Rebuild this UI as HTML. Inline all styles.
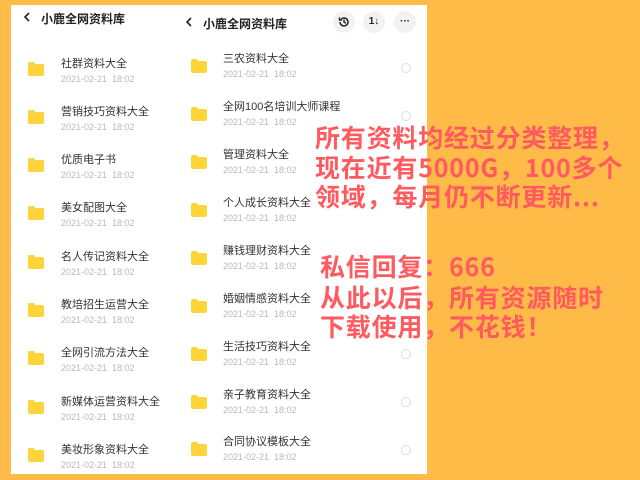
<!DOCTYPE html>
<html><head><meta charset="utf-8"><style>
*{margin:0;padding:0}
body{width:640px;height:480px;background:#FFBB48;position:relative;overflow:hidden;font-family:"Liberation Sans","Noto Sans CJK SC",sans-serif}
.panel{position:absolute;left:11px;top:5px;width:416px;height:469px;background:#fff}
.a{position:absolute;white-space:nowrap}
.t{font-size:11px;color:#333;line-height:14px}
.d{font-size:9px;color:#b8b8c2;line-height:12px}
.f{position:absolute;width:16px;height:12px;background:#FFD43B;border-radius:2px}
.f:before{content:"";position:absolute;left:0;top:-2px;width:7px;height:4px;background:#FFD43B;border-radius:2px 2px 0 0}
.r{position:absolute;width:8px;height:8px;border:1px solid #ddd;border-radius:50%}
.h{font-size:12px;color:#222;font-weight:bold}
.ic{position:absolute;width:22px;height:22px;border-radius:50%;background:#f2f2f2;font-size:10px;font-weight:bold;text-align:center;line-height:22px;color:#222}
.red{position:absolute;left:315px;color:#FF5A5F;font-size:25px;line-height:29px;font-weight:bold;letter-spacing:0.8px;font-family:"Noto Sans CJK SC",sans-serif;white-space:nowrap}
svg.c{position:absolute}
</style></head><body>
<div class="panel"></div>
<svg class="c" style="left:23px;top:11px" width="8" height="12" viewBox="0 0 8 12"><path d="M6 2L2 6l4 4" fill="none" stroke="#222" stroke-width="1.6"/></svg>
<div class="a h" style="left:41px;top:10px">小鹿全网资料库</div>
<svg class="c" style="left:185px;top:16px" width="8" height="12" viewBox="0 0 8 12"><path d="M6 2L2 6l4 4" fill="none" stroke="#222" stroke-width="1.6"/></svg>
<div class="a h" style="left:203px;top:15px">小鹿全网资料库</div>
<div class="ic" style="left:333px;top:11px"><svg width="12" height="12" viewBox="0 0 12 12" style="margin-top:5px"><path d="M2 6a4 4 0 1 0 1.2-2.9M1.5 1.5v2.5h2.5M6 3.5V6l1.8 1.2" fill="none" stroke="#222" stroke-width="1.5"/></svg></div>
<div class="ic" style="left:363px;top:11px">1↓</div>
<div class="ic" style="left:394px;top:11px">···</div>

<div class="f" style="left:28px;top:64px"></div><div class="a t" style="left:61px;top:57px">社群资料大全</div><div class="a d" style="left:61px;top:73px">2021-02-21&nbsp; 18:02</div>
<div class="f" style="left:28px;top:112px"></div><div class="a t" style="left:61px;top:105px">营销技巧资料大全</div><div class="a d" style="left:61px;top:121px">2021-02-21&nbsp; 18:02</div>
<div class="f" style="left:28px;top:160px"></div><div class="a t" style="left:61px;top:153px">优质电子书</div><div class="a d" style="left:61px;top:169px">2021-02-21&nbsp; 18:02</div>
<div class="f" style="left:28px;top:208px"></div><div class="a t" style="left:61px;top:201px">美女配图大全</div><div class="a d" style="left:61px;top:217px">2021-02-21&nbsp; 18:02</div>
<div class="f" style="left:28px;top:257px"></div><div class="a t" style="left:61px;top:250px">名人传记资料大全</div><div class="a d" style="left:61px;top:266px">2021-02-21&nbsp; 18:02</div>
<div class="f" style="left:28px;top:305px"></div><div class="a t" style="left:61px;top:298px">教培招生运营大全</div><div class="a d" style="left:61px;top:314px">2021-02-21&nbsp; 18:02</div>
<div class="f" style="left:28px;top:353px"></div><div class="a t" style="left:61px;top:346px">全网引流方法大全</div><div class="a d" style="left:61px;top:362px">2021-02-21&nbsp; 18:02</div>
<div class="f" style="left:28px;top:402px"></div><div class="a t" style="left:61px;top:395px">新媒体运营资料大全</div><div class="a d" style="left:61px;top:411px">2021-02-21&nbsp; 18:02</div>
<div class="f" style="left:28px;top:450px"></div><div class="a t" style="left:61px;top:443px">美妆形象资料大全</div><div class="a d" style="left:61px;top:459px">2021-02-21&nbsp; 18:02</div>

<div class="f" style="left:191px;top:61px"></div><div class="a t" style="left:223px;top:52px">三农资料大全</div><div class="a d" style="left:223px;top:68px">2021-02-21&nbsp; 18:02</div><div class="r" style="left:401px;top:63px"></div>
<div class="f" style="left:191px;top:109px"></div><div class="a t" style="left:223px;top:100px">全网100名培训大师课程</div><div class="a d" style="left:223px;top:116px">2021-02-21&nbsp; 18:02</div><div class="r" style="left:401px;top:111px"></div>
<div class="f" style="left:191px;top:157px"></div><div class="a t" style="left:223px;top:148px">管理资料大全</div><div class="a d" style="left:223px;top:164px">2021-02-21&nbsp; 18:02</div>
<div class="f" style="left:191px;top:205px"></div><div class="a t" style="left:223px;top:196px">个人成长资料大全</div><div class="a d" style="left:223px;top:212px">2021-02-21&nbsp; 18:02</div>
<div class="f" style="left:191px;top:253px"></div><div class="a t" style="left:223px;top:244px">赚钱理财资料大全</div><div class="a d" style="left:223px;top:260px">2021-02-21&nbsp; 18:02</div>
<div class="f" style="left:191px;top:301px"></div><div class="a t" style="left:223px;top:292px">婚姻情感资料大全</div><div class="a d" style="left:223px;top:308px">2021-02-21&nbsp; 18:02</div>
<div class="f" style="left:191px;top:349px"></div><div class="a t" style="left:223px;top:340px">生活技巧资料大全</div><div class="a d" style="left:223px;top:356px">2021-02-21&nbsp; 18:02</div><div class="r" style="left:401px;top:349px"></div>
<div class="f" style="left:191px;top:397px"></div><div class="a t" style="left:223px;top:388px">亲子教育资料大全</div><div class="a d" style="left:223px;top:404px">2021-02-21&nbsp; 18:02</div><div class="r" style="left:401px;top:397px"></div>
<div class="f" style="left:191px;top:444px"></div><div class="a t" style="left:223px;top:435px">合同协议模板大全</div><div class="a d" style="left:223px;top:451px">2021-02-21&nbsp; 18:02</div><div class="r" style="left:401px;top:445px"></div>

<div class="red" style="top:123px">所有资料均经过分类整理，</div>
<div class="red" style="top:153px">现在近有5000G，100多个</div>
<div class="red" style="top:182px">领域，每月仍不断更新...</div>
<div class="red" style="top:252px;left:320px">私信回复：666</div>
<div class="red" style="top:283px;left:320px">从此以后，所有资源随时</div>
<div class="red" style="top:312px;left:320px">下载使用，不花钱！</div>
</body></html>
